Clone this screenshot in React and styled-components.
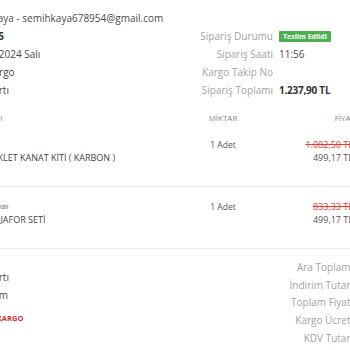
import React from 'react'
import styled, { createGlobalStyle } from 'styled-components'

const GlobalStyle = createGlobalStyle`
  html, body {
    margin: 0;
    padding: 0;
    background: #fff;
    overflow: hidden;
  }
  body {
    font-family: 'Open Sans', 'Liberation Sans', sans-serif;
    color: #444;
  }
`

const Viewport = styled.div`
  width: 350px;
  height: 350px;
  overflow: hidden;
`

const Sheet = styled.div`
  width: 620px;
  margin-left: -210px;
`

const Top = styled.div`
  display: flex;
  align-items: flex-end;
  padding-top: 9px;
`

const LeftInfo = styled.div`
  width: 393px;
  padding-left: 60px;
  box-sizing: border-box;
  display: grid;
  grid-template-columns: 110px 1fr;
  grid-auto-rows: 18px;
  align-items: center;
  font-size: 10px;
  white-space: nowrap;
`

const RightInfo = styled.div`
  display: grid;
  grid-template-columns: 90px auto;
  column-gap: 6px;
  grid-auto-rows: 18px;
  align-items: center;
  font-size: 10px;
  white-space: nowrap;
`

const Label = styled.span`
  color: #a3a3a3;
  text-align: ${p => (p.$right ? 'right' : 'left')};
`

const Value = styled.span`
  color: ${p => (p.$strong ? '#333' : '#4a4a4a')};
  font-weight: ${p => (p.$strong ? 700 : 400)};
  letter-spacing: ${p => (p.$strong ? '-0.25px' : '0')};
`

const Badge = styled.span`
  justify-self: start;
  background: #4caf50;
  color: #fff;
  font-size: 7px;
  font-weight: 700;
  padding: 0 4px;
  height: 11px;
  line-height: 11px;
  border-radius: 1px;
`

const Table = styled.div`
  margin-top: 10px;
`

const TableRow = styled.div`
  display: grid;
  grid-template-columns: 1fr 40px 110px 57px;
  box-sizing: border-box;
  ${p =>
    p.$head
      ? `height: 16px; align-items: center;`
      : `height: 62px; padding-top: 13px; border-bottom: 1px solid #ececec; align-items: start;`}
`

const HeadCell = styled.div`
  font-size: 8px;
  color: #888;
  text-align: ${p => p.$align || 'left'};
  padding-left: ${p => p.$pad || 0}px;
  margin-right: ${p => p.$shift || 0}px;
  white-space: nowrap;
`

const Product = styled.div`
  display: flex;
  gap: 10px;
  padding-left: 123px;
`

const Thumb = styled.div`
  width: 40px;
  height: 35px;
  background: #f3f3f3;
`

const ProductText = styled.div`
  display: flex;
  flex-direction: column;
  white-space: nowrap;
`

const Variant = styled.span`
  font-size: 7px;
  color: #666;
  height: 13px;
  line-height: 13px;
`

const Name = styled.span`
  font-size: 9px;
  color: #444;
  height: 13px;
  line-height: 13px;
`

const Qty = styled.div`
  font-size: 8.5px;
  color: #555;
  text-align: center;
  line-height: 13px;
  white-space: nowrap;
`

const Price = styled.div`
  display: flex;
  flex-direction: column;
  align-items: flex-end;
  font-size: 9px;
  line-height: 13px;
  white-space: nowrap;
`

const OldPrice = styled.span`
  color: #e53935;
  text-decoration: line-through;
`

const NewPrice = styled.span`
  color: #555;
`

const Summary = styled.div`
  display: flex;
  justify-content: space-between;
  align-items: flex-start;
  padding-top: 9px;
`

const PayInfo = styled.div`
  padding-top: 10px;
  padding-left: 60px;
  display: grid;
  grid-template-columns: 110px 1fr;
  grid-auto-rows: 18px;
  align-items: center;
  font-size: 10px;
  white-space: nowrap;
`

const CargoTag = styled.span`
  grid-column: 2;
  color: #d32f2f;
  font-weight: 700;
  font-size: 7.5px;
  align-self: end;
  line-height: 8px;
`

const Totals = styled.div`
  display: grid;
  grid-template-columns: auto 57px;
  grid-auto-rows: 17.8px;
  align-items: center;
  font-size: 10px;
  white-space: nowrap;
`

const TotalValue = styled.span`
  color: #444;
  text-align: right;
`

const info = [
  ['Müşteri', 'Semih Kaya - semihkaya678954@gmail.com'],
  ['Sipariş No', '24031255', true],
  ['Sipariş Tarihi', '12 Mart 2024 Salı'],
  ['Kargo Firması', 'Sürat Kargo'],
  ['Ödeme Tipi', 'Kredi Kartı'],
]

const items = [
  { variant: '', name: 'MOTOSİKLET KANAT KİTİ ( KARBON )', old: '1.082,50 TL', price: '499,17 TL' },
  { variant: 'Modeli: Boyalı', name: 'SPOİLER JAFOR SETİ', old: '833,33 TL', price: '499,17 TL' },
]

const totals = [
  ['Ara Toplamı', '998,34 TL'],
  ['İndirim Tutarı', '0,00 TL'],
  ['Toplam Fiyatı', '998,34 TL'],
  ['Kargo Ücreti', '0,00 TL'],
  ['KDV Tutarı', '239,56 TL'],
]

export default function App() {
  return (
    <Viewport>
      <GlobalStyle />
      <Sheet>
        <Top>
          <LeftInfo>
            {info.map(([l, v, strong]) => (
              <React.Fragment key={l}>
                <Label>{l}</Label>
                <Value $strong={strong}>{v}</Value>
              </React.Fragment>
            ))}
          </LeftInfo>
          <RightInfo>
            <Label $right>Sipariş Durumu</Label>
            <Badge>Teslim Edildi</Badge>
            <Label $right>Sipariş Saati</Label>
            <Value>11:56</Value>
            <Label $right>Kargo Takip No</Label>
            <Value />
            <Label $right>Sipariş Toplamı</Label>
            <Value $strong>1.237,90 TL</Value>
          </RightInfo>
        </Top>

        <Table>
          <TableRow $head>
            <HeadCell $pad={175}>ÜRÜN ADI</HeadCell>
            <HeadCell $align="center">MİKTAR</HeadCell>
            <HeadCell $align="right" $shift={-2}>FİYAT</HeadCell>
            <HeadCell $align="right">TUTAR</HeadCell>
          </TableRow>
          {items.map((it, i) => (
            <TableRow key={i}>
              <Product>
                <Thumb />
                <ProductText>
                  <Variant>{it.variant}</Variant>
                  <Name>{it.name}</Name>
                </ProductText>
              </Product>
              <Qty>1 Adet</Qty>
              <Price>
                <OldPrice>{it.old}</OldPrice>
                <NewPrice>{it.price}</NewPrice>
              </Price>
              <Price>
                <NewPrice>{it.price}</NewPrice>
              </Price>
            </TableRow>
          ))}
        </Table>

        <Summary>
          <PayInfo>
            <Label>Ödeme Tipi</Label>
            <Value>Kredi Kartı</Value>
            <Label>Taksit</Label>
            <Value>Tek Çekim</Value>
            <CargoTag>ÜCRETSİZ KARGO</CargoTag>
          </PayInfo>
          <Totals>
            {totals.map(([l, v]) => (
              <React.Fragment key={l}>
                <Label $right>{l}</Label>
                <TotalValue>{v}</TotalValue>
              </React.Fragment>
            ))}
          </Totals>
        </Summary>
      </Sheet>
    </Viewport>
  )
}
